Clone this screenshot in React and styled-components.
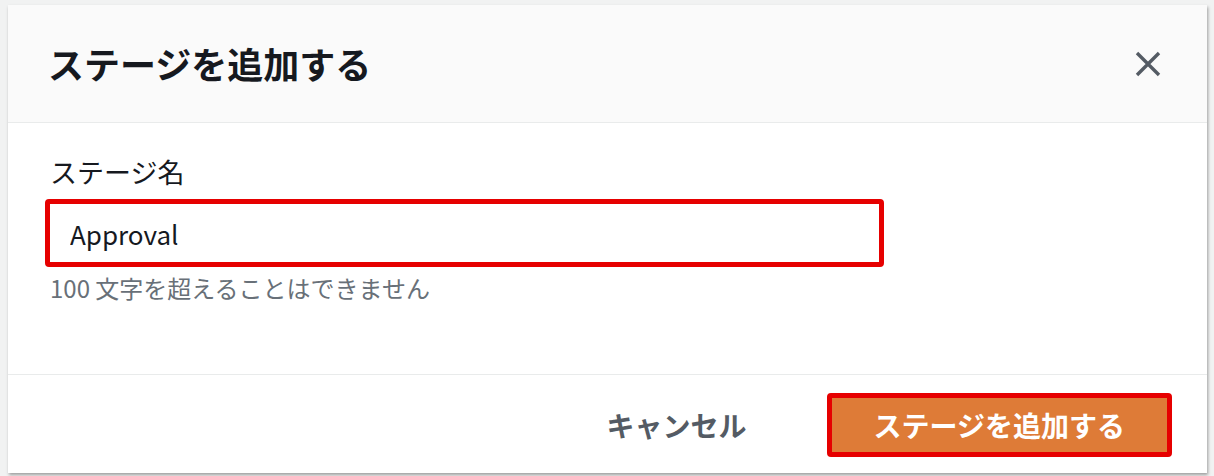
import { styled, createGlobalStyle } from "styled-components";

const GlobalStyle = createGlobalStyle`
    html, body {
        margin: 0;
        padding: 0;
        background-color: #f1f2f2;
        font-family: "Noto Sans CJK JP", "Noto Sans", sans-serif;
    }
`;

const Page = styled.div`
    width: 1214px;
    height: 476px;
    padding: 5px 7px 3px 8px;
    box-sizing: border-box;
`;

const Modal = styled.div`
    width: 1199px;
    height: 468px;
    background-color: white;
    display: flex;
    flex-direction: column;
    box-shadow: 1px 2px 3px rgba(0, 0, 0, 0.35);
`;

const Header = styled.div`
    height: 117px;
    flex-shrink: 0;
    display: flex;
    align-items: center;
    justify-content: space-between;
    padding: 0 46px 0 40px;
    background-color: #fafafa;
    border-bottom: 1px solid #e9ebeb;
`;

const Title = styled.h1`
    margin: 0;
    font-size: 36px;
    font-weight: 700;
    color: #16191f;
    line-height: 1.2;
`;

const CloseButton = styled.button`
    width: 26px;
    height: 26px;
    padding: 0;
    border: none;
    background: none;
    display: flex;
    color: #545b64;
    margin-top: 1px;
`;

const Body = styled.div`
    flex: 1;
    padding: 29px 42px 0;
    border-bottom: 1px solid #e9ebeb;
`;

const Label = styled.label`
    display: block;
    font-size: 27px;
    line-height: 40px;
    color: #16191f;
    margin-bottom: 7px;
`;

const Input = styled.input`
    display: block;
    width: 839px;
    height: 68px;
    margin-left: -5px;
    box-sizing: border-box;
    border: 5px solid #e60000;
    border-radius: 4px;
    padding: 0 20px;
    font-family: "Noto Sans CJK JP", "Noto Sans", sans-serif;
    font-size: 26px;
    color: #16191f;
    outline: none;
`;

const Hint = styled.div`
    margin-top: 4px;
    font-size: 24px;
    line-height: 34px;
    color: #687078;
`;

const Footer = styled.div`
    height: 98px;
    flex-shrink: 0;
    display: flex;
    align-items: center;
    justify-content: flex-end;
    gap: 60px;
    padding: 2px 35px 0 0;
    box-sizing: border-box;
`;

const Button = styled.button`
    height: 64px;
    box-sizing: border-box;
    font-family: "Noto Sans CJK JP", "Noto Sans", sans-serif;
    font-size: 28px;
    font-weight: 700;
    padding: ${(props) => (props.$primary ? "0 42px" : "0 20px")};
    border: ${(props) => (props.$primary ? "5px solid #e60000" : "none")};
    border-radius: 4px;
    background-color: ${(props) => (props.$primary ? "#de7b37" : "transparent")};
    color: ${(props) => (props.$primary ? "white" : "#545b64")};
`;

function App() {
  return (
    <Page>
        <GlobalStyle />
        <Modal>
            <Header>
                <Title>ステージを追加する</Title>
                <CloseButton>
                    <svg width="26" height="26" viewBox="0 0 26 26">
                        <path d="M2 2 L24 24 M24 2 L2 24" stroke="currentColor" strokeWidth="3.4" />
                    </svg>
                </CloseButton>
            </Header>
            <Body>
                <Label>ステージ名</Label>
                <Input defaultValue="Approval" />
                <Hint>100 文字を超えることはできません</Hint>
            </Body>
            <Footer>
                <Button>キャンセル</Button>
                <Button $primary>ステージを追加する</Button>
            </Footer>
        </Modal>
    </Page>
  )
}

export default App;
